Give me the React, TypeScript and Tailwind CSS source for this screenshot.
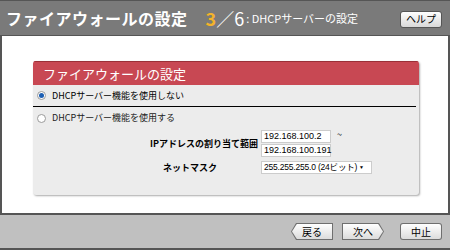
import type { JSX } from "react";

const FONT = { fontFamily: '"Noto Sans CJK JP", "Liberation Sans", sans-serif' };
const FIELD_FONT = { fontFamily: '"Liberation Sans", "Noto Sans CJK JP", sans-serif' };

function Radio({ checked }: { checked: boolean }): JSX.Element {
  return (
    <span className="flex h-[9px] w-[9px] items-center justify-center rounded-full border border-[#9a9a9a] bg-white">
      {checked && <span className="h-[5px] w-[5px] rounded-full bg-[#1d5fb3]" />}
    </span>
  );
}

function NavButton({ label, dir }: { label: string; dir: "left" | "right" | "none" }): JSX.Element {
  const clip =
    dir === "left"
      ? "[clip-path:polygon(12%_0,100%_0,100%_100%,12%_100%,0_50%)]"
      : dir === "right"
        ? "[clip-path:polygon(0_0,88%_0,100%_50%,88%_100%,0_100%)]"
        : "";
  return (
    <div className={`${clip} bg-[#6f6f6f] p-px ${dir === "none" ? "rounded-[3px]" : ""}`}>
      <div
        className={`${clip} flex h-[15px] w-[40px] items-center justify-center bg-gradient-to-b from-white to-[#dcdcdc] text-[10px] leading-none text-black ${dir === "none" ? "rounded-[2px]" : ""}`}
      >
        {label}
      </div>
    </div>
  );
}

export default function App(): JSX.Element {
  return (
    <div className="flex h-[250px] w-[450px] flex-col bg-white" style={FONT}>
      <header className="flex h-[36px] items-center border-y border-[#555] bg-[#7a7a7a] pr-[8px] pl-[6px]">
        <span className="text-[16px] font-bold tracking-[0.5px] text-white">ファイアウォールの設定</span>
        <span className="ml-[18px] text-[18px] font-bold text-[#f3b32a]">3</span>
        <span className="text-[18px] text-white">／6</span>
        <span className="ml-[2px] text-[11px] text-white">: DHCPサーバーの設定</span>
        <div className="mt-[2px] ml-auto flex h-[17px] w-[42px] items-center justify-center rounded-[3px] border border-[#555] bg-gradient-to-b from-white to-[#d8d8d8] text-[10px] leading-none text-black">
          ヘルプ
        </div>
      </header>

      <main className="flex flex-1 border-x-2 border-[#555] pt-[25px] pl-[31px]">
        <section className="h-[134px] w-[386px] overflow-hidden rounded-[3px] bg-[#ececec] shadow-[1px_1px_2px_#aaa]">
          <div className="flex h-[24px] items-center border-t border-[#9a3038] bg-[#c84853] pl-[10px] text-[13px] text-white">
            ファイアウォールの設定
          </div>
          <div className="flex h-[21px] items-center gap-[6px] pl-[4px] text-[9px] text-black">
            <Radio checked />
            DHCPサーバー機能を使用しない
          </div>
          <div className="mr-[3px] border-t border-black" />
          <div className="flex h-[22px] items-center gap-[6px] pl-[4px] text-[9px] text-[#222]">
            <Radio checked={false} />
            DHCPサーバー機能を使用する
          </div>
          <div className="mt-[1px] grid grid-cols-[225px_auto] gap-x-[3px] gap-y-[4px] text-[9px] leading-[11px]">
            <div className="flex items-center justify-end font-bold">IPアドレスの割り当て範囲</div>
            <div className="flex items-start gap-[6px]">
              <div className="flex flex-col gap-[1px]" style={FIELD_FONT}>
                <div className="h-[13px] w-[70px] border border-[#ccc] bg-white pl-[2px] whitespace-nowrap">192.168.100.2</div>
                <div className="h-[13px] w-[70px] border border-[#ccc] bg-white pl-[2px] whitespace-nowrap">192.168.100.191</div>
              </div>
              <span className="leading-[10px]">~</span>
            </div>
            <div className="flex items-center pl-[130px] font-bold">ネットマスク</div>
            <div
              className="flex h-[13px] w-[111px] items-center justify-between border border-[#ccc] bg-white pr-[7px] pl-[2px] whitespace-nowrap"
              style={FIELD_FONT}
            >
              <span className="text-[8.5px] tracking-[-0.2px]">255.255.255.0 (24ビット)</span>
              <span className="text-[5px]">▼</span>
            </div>
          </div>
        </section>
      </main>

      <footer className="flex h-[37px] items-center justify-end gap-[9px] border-y-2 border-[#555] bg-[#c0c0c0] pr-[8px]">
        <NavButton label="戻る" dir="left" />
        <div className="mr-[7px]">
          <NavButton label="次へ" dir="right" />
        </div>
        <NavButton label="中止" dir="none" />
      </footer>
    </div>
  );
}
